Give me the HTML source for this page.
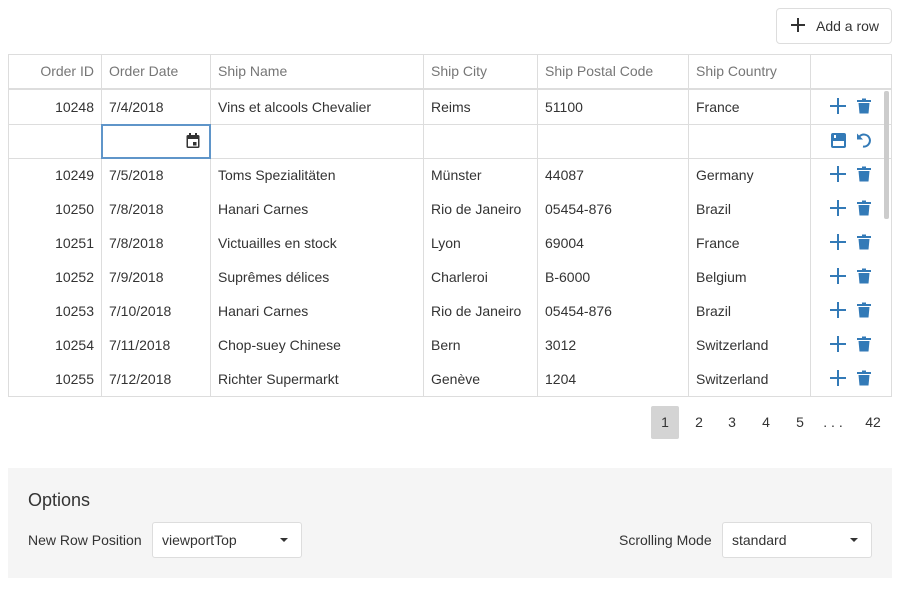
<!DOCTYPE html>
<html><head><meta charset="utf-8"><style>
body{margin:0;width:900px;height:600px;background:#fff;font-family:"Liberation Sans",sans-serif;font-size:14px;color:#333;position:relative;overflow:hidden}
.abs{position:absolute}
.btn{left:776px;top:8px;width:116px;height:36px;border:1px solid #ddd;border-radius:4px;box-sizing:border-box;background:#fff}
.grid{left:8px;top:54px;width:884px;height:343px;border:1px solid #ddd;box-sizing:border-box}
.vl{position:absolute;top:54px;height:343px;width:1px;background:#ddd}
.hl{position:absolute;left:8px;width:884px;height:1px;background:#ddd}
.c{position:absolute;line-height:34px;white-space:nowrap}
.h{color:#767676}
.r{text-align:right}
.ic{position:absolute}
.pg{position:absolute;top:406px;height:33px;line-height:33px;text-align:center;width:28px}
</style></head><body>
<div class="abs btn"><svg class="ic" style="left:14px;top:9px" width="14" height="14"><path d="M7 0v14M0 7h14" stroke="#333" stroke-width="2"/></svg><span class="c" style="left:39px;top:0;line-height:34px;color:#333">Add a row</span></div>
<div class="abs grid"></div>
<div class="vl" style="left:101px"></div><div class="vl" style="left:210px"></div><div class="vl" style="left:423px"></div><div class="vl" style="left:537px"></div><div class="vl" style="left:688px"></div><div class="vl" style="left:810px"></div>
<div class="hl" style="top:88px;height:2px"></div>
<div class="hl" style="top:124px"></div>
<div class="hl" style="top:158px"></div>
<div class="abs" style="left:884px;top:91px;width:5px;height:128px;background:#ccc;border-radius:2px"></div>
<div class="abs" style="left:101px;top:124px;width:110px;height:35px;border:2px solid #5f95c9;box-sizing:border-box;background:#fff"></div>
<svg class="ic" style="left:186px;top:133px" width="14" height="16" viewBox="0 0 14 16"><rect x="0.5" y="2" width="13" height="13" rx="1.5" fill="#333"/><rect x="2" y="6" width="10" height="7.5" fill="#fff"/><rect x="3" y="0" width="2" height="3" fill="#333"/><rect x="9" y="0" width="2" height="3" fill="#333"/><rect x="7" y="9" width="3.5" height="3.5" fill="#333"/></svg>
<svg class="ic" style="left:831px;top:133px" width="15" height="15" viewBox="0 0 15 15"><rect x="0" y="0" width="15" height="15" rx="2" fill="#337ab7"/><rect x="2" y="8" width="11" height="5" fill="#fff"/><rect x="3" y="2" width="2" height="3" fill="#fff"/></svg>
<svg class="ic" style="left:856px;top:132px" width="16" height="16" viewBox="0 0 16 16"><path d="M3.5 4.5A6 6 0 1 1 7 14.5" fill="none" stroke="#337ab7" stroke-width="2"/><path d="M1 1.5v6h6z" fill="#337ab7"/></svg>
<div id="cells"></div>
<div class="c h r" style="left:8px;width:86px;top:54px">Order ID</div>
<div class="c h" style="left:109px;top:54px">Order Date</div>
<div class="c h" style="left:218px;top:54px">Ship Name</div>
<div class="c h" style="left:431px;top:54px">Ship City</div>
<div class="c h" style="left:545px;top:54px">Ship Postal Code</div>
<div class="c h" style="left:696px;top:54px">Ship Country</div>
<script>
var rows=[[90,"10248","7/4/2018","Vins et alcools Chevalier","Reims","51100","France"],
[158,"10249","7/5/2018","Toms Spezialitäten","Münster","44087","Germany"],
[192,"10250","7/8/2018","Hanari Carnes","Rio de Janeiro","05454-876","Brazil"],
[226,"10251","7/8/2018","Victuailles en stock","Lyon","69004","France"],
[260,"10252","7/9/2018","Suprêmes délices","Charleroi","B-6000","Belgium"],
[294,"10253","7/10/2018","Hanari Carnes","Rio de Janeiro","05454-876","Brazil"],
[328,"10254","7/11/2018","Chop-suey Chinese","Bern","3012","Switzerland"],
[362,"10255","7/12/2018","Richter Supermarkt","Genève","1204","Switzerland"]];
var h="",L=[109,218,431,545,696];
rows.forEach(function(r){var t=r[0];
h+='<div class="c r" style="left:8px;width:86px;top:'+t+'px">'+r[1]+'</div>';
for(var i=0;i<5;i++)h+='<div class="c" style="left:'+L[i]+'px;top:'+t+'px">'+r[i+2]+'</div>';
h+='<svg class="ic" style="left:830px;top:'+(t+8)+'px" width="16" height="16"><path d="M8 0v16M0 8h16" stroke="#337ab7" stroke-width="2"/></svg>';
h+='<svg class="ic" style="left:857px;top:'+(t+8)+'px" width="14" height="16" viewBox="0 0 14 16"><rect x="0" y="2" width="14" height="2" fill="#337ab7"/><rect x="5" y="0.5" width="4" height="2" fill="#337ab7"/><path d="M1.5 5h11l-1 10.5h-9z" fill="#337ab7"/></svg>';
});
document.getElementById("cells").innerHTML=h;
</script>
<div class="abs" style="left:651px;top:406px;width:28px;height:33px;background:#d4d4d4;border-radius:2px"></div>
<div class="pg" style="left:651px">1</div><div class="pg" style="left:685px">2</div><div class="pg" style="left:718px">3</div><div class="pg" style="left:752px">4</div><div class="pg" style="left:786px">5</div><div class="pg" style="left:819px">. . .</div><div class="pg" style="left:859px">42</div>
<div class="abs" style="left:8px;top:468px;width:884px;height:110px;background:#f5f5f5"></div>
<div class="abs" style="left:28px;top:490px;font-size:18px;color:#333">Options</div>
<div class="c" style="left:28px;top:523px">New Row Position</div>
<div class="abs" style="left:152px;top:522px;width:150px;height:36px;border:1px solid #ddd;border-radius:3px;box-sizing:border-box;background:#fff"><span class="c" style="left:9px;top:0">viewportTop</span><svg class="ic" style="left:127px;top:15px" width="8" height="5"><path d="M0 0h8L4 4z" fill="#333"/></svg></div>
<div class="c" style="left:619px;top:523px">Scrolling Mode</div>
<div class="abs" style="left:722px;top:522px;width:150px;height:36px;border:1px solid #ddd;border-radius:3px;box-sizing:border-box;background:#fff"><span class="c" style="left:9px;top:0">standard</span><svg class="ic" style="left:127px;top:15px" width="8" height="5"><path d="M0 0h8L4 4z" fill="#333"/></svg></div>
</body></html>
